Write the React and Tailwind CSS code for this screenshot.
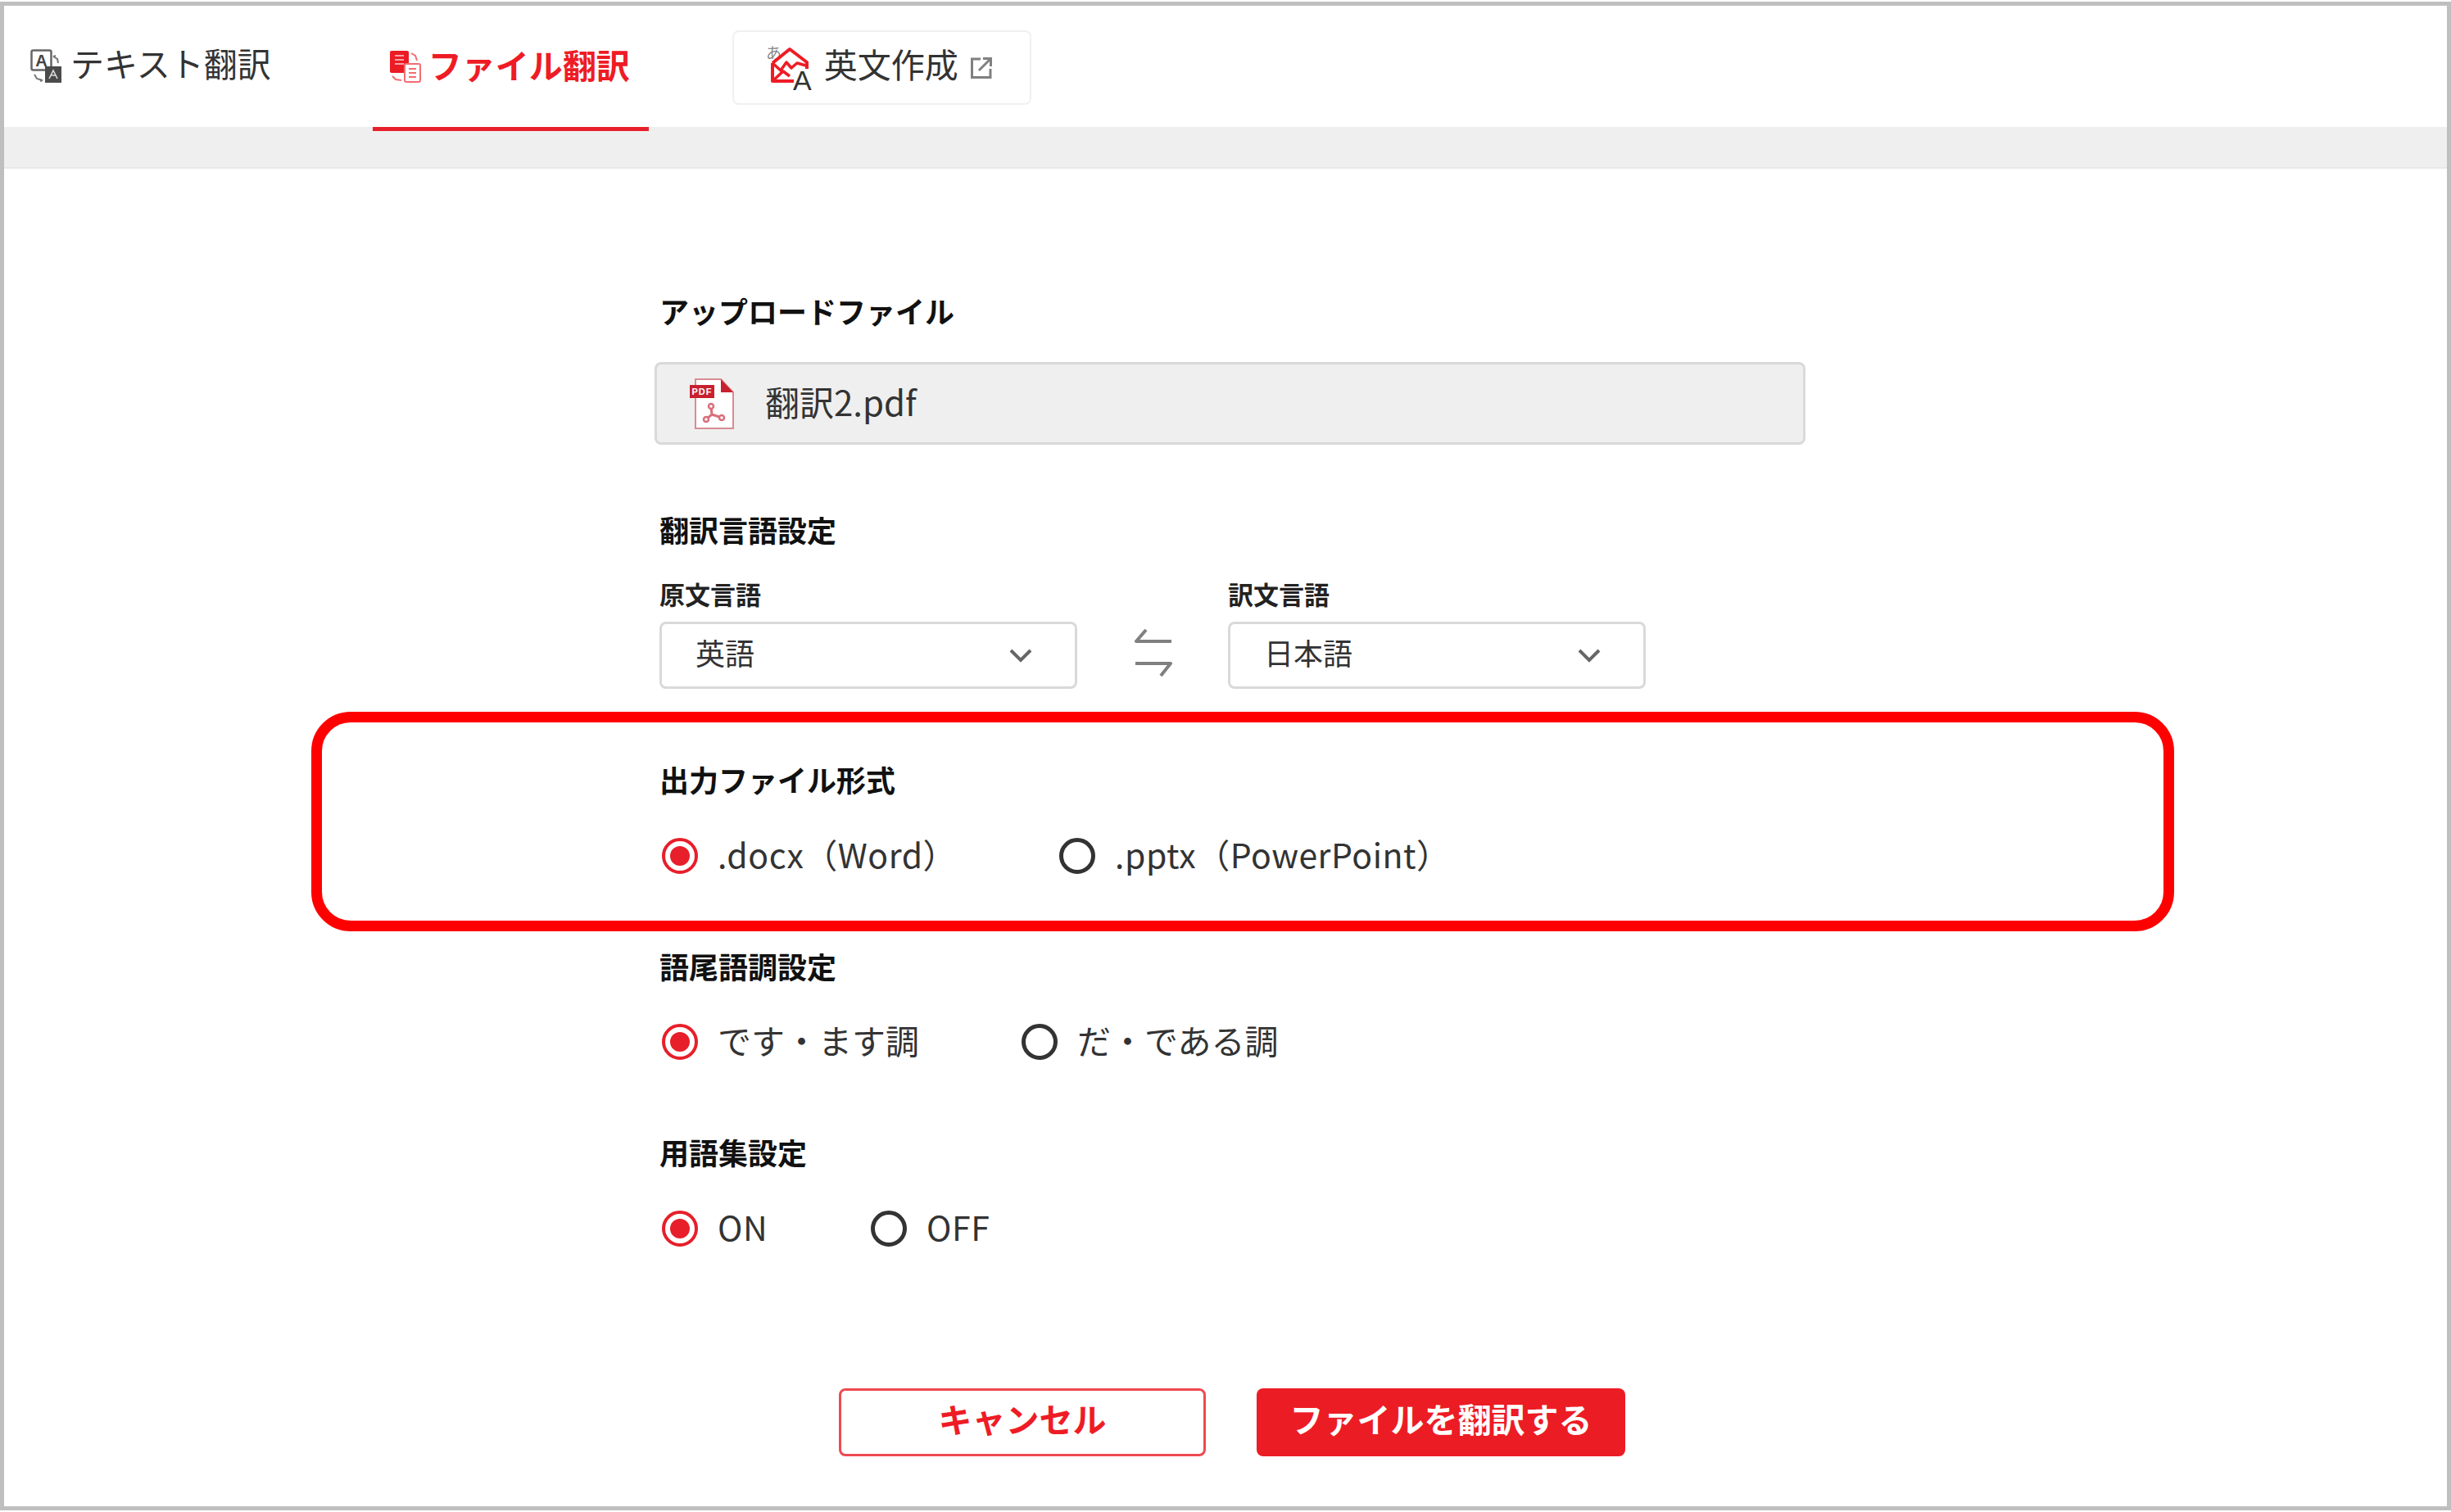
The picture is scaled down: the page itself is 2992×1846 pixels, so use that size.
const jp = "font-['Noto_Sans_CJK_JP','Noto_Sans',sans-serif]";

const TextIcon = () => (
  <svg width="40" height="42" viewBox="0 0 40 42" fill="none" className="shrink-0">
    <rect x="1.5" y="1.5" width="24" height="24" rx="2" stroke="#666" strokeWidth="2.5" />
    <text x="13.5" y="21" textAnchor="middle" fontSize="20" fontWeight="700" fontFamily="Liberation Sans" fill="#444">A</text>
    <rect x="18" y="21" width="20" height="20" fill="#4a4a4a" />
    <path d="M23 36l5-10 5 10M25 32h6" stroke="#ddd" strokeWidth="1.6" />
    <path d="M28 9l5 3 1 5M28 9l3-1M5 31l3 5 7 2M15 38l-3 1" stroke="#777" strokeWidth="2" />
  </svg>
);

const FileIcon = () => (
  <svg width="38" height="40" viewBox="0 0 38 40" fill="none" className="shrink-0">
    <rect x="0" y="1" width="23" height="27" rx="2" fill="#ec1c24" />
    <path d="M6 7h11M6 12h11M6 17h11" stroke="#f6a4a7" strokeWidth="2" />
    <rect x="18" y="17" width="19" height="22" rx="2" fill="#fff" stroke="#f26d72" strokeWidth="2" />
    <path d="M23 23h9M23 28h9M23 33h9" stroke="#f26d72" strokeWidth="2" />
    <path d="M26 4l5 3 2 6M3 32l4 4 7 1" stroke="#f26d72" strokeWidth="2" />
  </svg>
);

const WriteIcon = () => (
  <svg width="58" height="58" viewBox="0 0 58 58" fill="none" className="shrink-0 overflow-visible">
    <text x="0" y="18" fontSize="19" fill="#888" fontFamily="Noto Sans CJK JP">あ</text>
    <path d="M8 23L29 6l21 16v8M8 23v22h26" stroke="#ee1c25" strokeWidth="4" strokeLinejoin="round" />
    <path d="M8 23l10 9 7-10 6 7 7-6 11 3M8 45l13-12 8 6" stroke="#ee1c25" strokeWidth="3.5" strokeLinejoin="round" />
    <text x="33" y="56" fontSize="34" fill="#333" fontFamily="Liberation Sans">A</text>
  </svg>
);

const ExternalIcon = () => (
  <svg width="28" height="28" viewBox="0 0 28 28" fill="none" stroke="#808080" strokeWidth="3">
    <path d="M13 3H2.5v22.5H25V15M16 2.5h9.5V12M25 3L11 17" />
  </svg>
);

const PdfIcon = () => (
  <svg width="54" height="62" viewBox="0 0 54 62" fill="none" className="shrink-0">
    <path d="M7 1h31l15 16v44H7z" fill="#fff" stroke="#d98c93" strokeWidth="2" />
    <path d="M38 1l15 16H38z" fill="#c8202f" />
    <rect x="0" y="8" width="30" height="16" fill="#c8202f" />
    <text x="15" y="20" textAnchor="middle" fontSize="11" fontWeight="700" fill="#fff" fontFamily="Liberation Sans" letterSpacing="1">PDF</text>
    <path d="M20 50l7-6-1-10M27 44l12 4" stroke="#d9707c" strokeWidth="3" />
    <circle cx="20" cy="50" r="3" stroke="#d9707c" strokeWidth="2.5" fill="#fff" />
    <circle cx="26" cy="34" r="3" stroke="#d9707c" strokeWidth="2.5" fill="#fff" />
    <circle cx="39" cy="48" r="3" stroke="#d9707c" strokeWidth="2.5" fill="#fff" />
  </svg>
);

const SwapIcon = () => (
  <svg width="48" height="58" viewBox="0 0 48 58" fill="none" stroke="#808080" strokeWidth="4" strokeLinejoin="round">
    <path d="M15 1L3 15h43" />
    <path d="M33 57l12-15H2" />
  </svg>
);

const Chevron = () => (
  <svg width="28" height="17" viewBox="0 0 28 17" fill="none" stroke="#666" strokeWidth="4">
    <path d="M2 2l12 12L26 2" />
  </svg>
);

const Radio = ({ label, checked, latin }) => (
  <label className="flex items-center gap-[24px]">
    {checked ? (
      <span className="flex h-[44px] w-[44px] shrink-0 items-center justify-center rounded-full border-[4px] border-[#e71f2b]">
        <span className="h-[24px] w-[24px] rounded-full bg-[#e71f2b]"></span>
      </span>
    ) : (
      <span className="h-[44px] w-[44px] shrink-0 rounded-full border-[5px] border-[#333]"></span>
    )}
    <span className={`-translate-y-[3px] text-[41px] leading-[44px] text-[#333] ${latin ? "tracking-[0.5px]" : ""}`}>{label}</span>
  </label>
);

const Heading = ({ children, className = "" }) => (
  <h2 className={`text-[36px] leading-[40px] font-bold text-[#111] ${className}`}>{children}</h2>
);

const Select = ({ label, value }) => (
  <div className="w-[510px]">
    <div className="text-[31px] leading-[36px] font-bold text-[#222]">{label}</div>
    <div className="mt-[16px] flex h-[82px] items-center justify-between rounded-lg border-[3px] border-[#d9d9d9] bg-white pr-[52px] pl-[41px]">
      <span className="mb-[8px] text-[36px] text-[#333]">{value}</span>
      <Chevron />
    </div>
  </div>
);

export default function App() {
  return (
    <div className={`${jp} relative h-[1846px] w-[2992px] overflow-hidden bg-white pt-[2px]`}>
      <div className="h-[1842px] border-[5px] border-[#bfbfbf]">
        <header className="flex h-[148px] items-start">
          <a className="mt-[53px] ml-[32px] flex items-center gap-[9px] text-[41px] leading-[42px] text-[#333]">
            <TextIcon />
            <span className="-translate-y-[5px]">テキスト翻訳</span>
          </a>
          <a className="ml-[124px] flex h-[153px] w-[337px] items-start gap-[9px] border-b-[5px] border-[#e71f2b] pt-[54px] pl-[21px] text-[41px] leading-[40px] font-bold text-[#ee1c25]">
            <span className="flex"><FileIcon /></span>
            <span className="-mt-[3px]">ファイル翻訳</span>
          </a>
          <a className="mt-[30px] ml-[102px] flex h-[91px] w-[365px] items-center rounded-lg border-[2px] border-[#f0f0f0] pl-[39px] text-[41px] text-[#333]">
            <span className="mr-[13px] flex"><WriteIcon /></span>
            <span className="mb-[10px]">英文作成</span>
            <span className="ml-[14px] flex"><ExternalIcon /></span>
          </a>
        </header>
        <div className="h-[51px] border-b-[2px] border-[#e8e8e8] bg-[#efefef]"></div>

        <main className="ml-[800px] w-[1500px] pt-[153px]">
          <Heading>アップロードファイル</Heading>
          <div className="mt-[43px] flex h-[101px] w-[1405px] -translate-x-[6px] items-center rounded-lg border-[3px] border-[#d9d9d9] bg-[#efefef] pl-[40px]">
            <PdfIcon />
            <span className="mb-[6px] ml-[38px] text-[42px] text-[#333]">翻訳2.pdf</span>
          </div>

          <Heading className="mt-[83px]">翻訳言語設定</Heading>
          <div className="mt-[41px] flex items-end">
            <Select label="原文言語" value="英語" />
            <div className="flex h-[82px] w-[184px] items-center justify-center pb-[6px] pl-[2px]"><SwapIcon /></div>
            <Select label="訳文言語" value="日本語" />
          </div>

          <Heading className="mt-[90px]">出力ファイル形式</Heading>
          <div className="mt-[52px] ml-[3px] flex">
            <Radio label=".docx（Word）" checked latin />
            <div className="ml-[125px]"><Radio label=".pptx（PowerPoint）" latin /></div>
          </div>

          <Heading className="mt-[92px]">語尾語調設定</Heading>
          <div className="mt-[51px] ml-[3px] flex">
            <Radio label="です・ます調" checked />
            <div className="ml-[125px]"><Radio label="だ・である調" /></div>
          </div>

          <Heading className="mt-[92px]">用語集設定</Heading>
          <div className="mt-[52px] ml-[3px] flex">
            <Radio label="ON" checked latin />
            <div className="ml-[126px]"><Radio label="OFF" latin /></div>
          </div>

          <div className="mt-[173px] ml-[219px] flex gap-[62px]">
            <button className="h-[83px] w-[448px] rounded-lg border-[3px] border-[#ee4a50] bg-white pb-[10px] text-[41px] font-bold text-[#ee1c25]">キャンセル</button>
            <button className="h-[83px] w-[450px] rounded-lg bg-[#ec1c24] pb-[10px] text-[41px] font-bold text-white">ファイルを翻訳する</button>
          </div>
        </main>
      </div>

      {/* 赤枠の注釈 */}
      <div className="absolute top-[869px] left-[380px] h-[268px] w-[2274px] rounded-[48px] border-[13px] border-[#ff0000]"></div>
    </div>
  );
}
